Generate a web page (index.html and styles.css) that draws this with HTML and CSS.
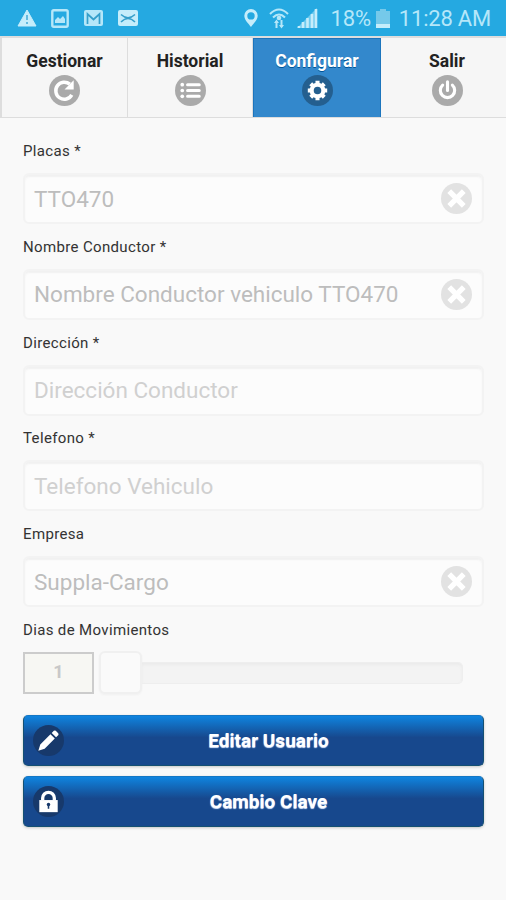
FILE: index.html
```html
<!DOCTYPE html>
<html lang="es">
<head>
    <meta charset="UTF-8">
    <title>Configurar</title>
    <link rel="stylesheet" href="styles.css">
</head>
<body>
    <div class="status-bar">
        <div class="notifications">
            <svg width="20" height="18" viewBox="0 0 20 18"><path d="M10 1L19 17H1Z" fill="#c5edfb" stroke="#c5edfb" stroke-linejoin="round"/><path d="M10 6v5M10 13v2" stroke="#62b9df" stroke-width="2"/></svg>
            <svg width="18" height="19" viewBox="0 0 18 19"><rect x="1.300" y="1.300" width="15.400" height="16.400" rx="1.500" fill="none" stroke="#b5e7f9" stroke-width="2.400"/><path d="M4 14V11l3-3 2 2 3-3 2 3v4z" fill="#b5e7f9"/></svg>
            <svg width="19" height="16" viewBox="0 0 19 16"><rect width="19" height="16" rx="2" fill="#b5e7f9"/><path d="M3.500 14V4l6 5.500L15.500 4v10" fill="none" stroke="#359fcb" stroke-width="1.700"/></svg>
            <svg width="20" height="16" viewBox="0 0 20 16"><rect width="20" height="16" rx="2" fill="#c5edfb"/><path d="M3 4.500Q10 11 17 4.500M3 12Q10 5 17 12" fill="none" stroke="#359fcb" stroke-width="1.600"/></svg>
        </div>
        <div class="system">
            <svg class="pin" width="14" height="18" viewBox="0 0 14 18"><path fill-rule="evenodd" d="M7 0a6.700 6.700 0 0 1 6.700 6.700C13.700 11 9 15 7 18C5 15 .3 11 .3 6.700A6.700 6.700 0 0 1 7 0zM7 3.200a3.700 3.700 0 1 0 0 7.400a3.700 3.700 0 0 0 0-7.400z" fill="#c5edfb"/></svg>
            <svg class="wifi" width="20" height="21" viewBox="0 0 20 21"><path d="M1 6Q10-3 19 6M4 9.500Q10 3.500 16 9.500" fill="none" stroke="#b5e7f9" stroke-width="2"/><circle cx="10" cy="10" r="2.300" fill="#b5e7f9"/><path d="M7.500 20v-7M12.500 12v7" stroke="#b5e7f9" stroke-width="2"/><path d="M5 15l2.500-3.500L10 15zM10 17l2.500 3.500L15 17z" fill="#b5e7f9"/></svg>
            <svg class="signal" width="21" height="20" viewBox="0 0 21 20"><path d="M0 20L20 0V20z" fill="#6fcbef"/><path d="M2 20v-2M6 20v-6M10.500 20v-10M15 20V6M19 20V1" stroke="#c5edfb" stroke-width="2.600"/></svg>
            <span class="percent">18%</span>
            <svg class="battery" width="14" height="19" viewBox="0 0 14 19"><path d="M4 0h6v2h4v17H0V2h4z" fill="#75c9ea"/><path d="M0 15h14v4H0z" fill="#c5edfb"/></svg>
            <span class="time">11:28 AM</span>
        </div>
    </div>

    <div class="navbar">
        <a class="tab">
            <span>Gestionar</span>
            <svg class="icon" viewBox="0 0 32 32"><circle cx="16" cy="16" r="16"/><path d="M23.500 20.500A8.800 8.800 0 1 1 21.500 9.500" fill="none" stroke="#fff" stroke-width="3.600"/><path d="M25.500 5.500v9.500H16z" fill="#fff"/></svg>
        </a>
        <a class="tab">
            <span>Historial</span>
            <svg class="icon" viewBox="0 0 32 32"><circle cx="16" cy="16" r="16"/><path d="M13 10h12M13 16h12M13 22h12" stroke="#fff" stroke-width="3.200" stroke-linecap="round"/><circle class="dot" cx="7.500" cy="10" r="1.900"/><circle class="dot" cx="7.500" cy="16" r="1.900"/><circle class="dot" cx="7.500" cy="22" r="1.900"/></svg>
        </a>
        <a class="tab active">
            <span>Configurar</span>
            <svg class="icon" viewBox="0 0 32 32"><circle cx="16" cy="16" r="16"/><circle cx="16" cy="16" r="6" fill="none" stroke="#fff" stroke-width="4.200"/><path d="M16 6v4M16 22v4M6 16h4M22 16h4M9 9l3 3M20 20l3 3M23 9l-3 3M12 20l-3 3" stroke="#fff" stroke-width="4.200"/></svg>
        </a>
        <a class="tab">
            <span>Salir</span>
            <svg class="icon" viewBox="0 0 32 32"><circle cx="16" cy="16" r="16"/><path d="M11 10.500a7.400 7.400 0 1 0 10 0" fill="none" stroke="#fff" stroke-width="3.200" stroke-linecap="round"/><path d="M16 7v9" stroke="#fff" stroke-width="3.200" stroke-linecap="round"/></svg>
        </a>
    </div>

    <div class="content">
        <div class="field">
            <label>Placas *</label>
            <div class="input-box">
                <span class="value">TTO470</span>
                <svg class="clear" viewBox="0 0 32 32"><circle cx="16" cy="16" r="16"/><path d="M8.500 8.500l15 15M23.500 8.500l-15 15"/></svg>
            </div>
        </div>
        <div class="field">
            <label>Nombre Conductor *</label>
            <div class="input-box">
                <span class="value">Nombre Conductor vehiculo TTO470</span>
                <svg class="clear" viewBox="0 0 32 32"><circle cx="16" cy="16" r="16"/><path d="M8.500 8.500l15 15M23.500 8.500l-15 15"/></svg>
            </div>
        </div>
        <div class="field">
            <label>Dirección *</label>
            <div class="input-box">
                <span class="value placeholder">Dirección Conductor</span>
            </div>
        </div>
        <div class="field">
            <label>Telefono *</label>
            <div class="input-box">
                <span class="value placeholder">Telefono Vehiculo</span>
            </div>
        </div>
        <div class="field">
            <label>Empresa</label>
            <div class="input-box">
                <span class="value">Suppla-Cargo</span>
                <svg class="clear" viewBox="0 0 32 32"><circle cx="16" cy="16" r="16"/><path d="M8.500 8.500l15 15M23.500 8.500l-15 15"/></svg>
            </div>
        </div>
        <div class="field slider-field">
            <label>Dias de Movimientos</label>
            <div class="slider">
                <div class="number">1</div>
                <div class="handle"></div>
                <div class="track"></div>
            </div>
        </div>

        <div class="button">
            <svg class="icon" viewBox="0 0 32 32"><circle cx="16" cy="16" r="16"/><path d="M5.500 26.500L7.500 20L18 9.500L22.500 14L12 24.500zM19.300 8.200L21.500 6Q22.500 5.200 23.500 6L26 8.500Q26.800 9.500 26 10.500L23.800 12.700z" fill="#fff"/></svg>
            <span>Editar Usuario</span>
        </div>
        <div class="button">
            <svg class="icon" viewBox="0 0 32 32"><circle cx="16" cy="16" r="16"/><path d="M10 15v-2.500a6 6 0 0 1 12 0V15" fill="none" stroke="#fff" stroke-width="3.400"/><path d="M6.500 14.500h19V27h-19z" fill="#fff"/><circle class="keyhole" cx="16" cy="19" r="1.800"/><path class="keyhole" d="M15.200 19h1.600v4.500h-1.600z"/></svg>
            <span>Cambio Clave</span>
        </div>
    </div>
</body>
</html>
```
FILE: styles.css
```css
* {
    box-sizing: border-box;
}

body {
    margin: 0;
    height: 900px;
    overflow: hidden;
    font-family: Roboto, sans-serif;
    background-color: #f9f9f9;
    color: #333;
}

svg {
    display: block;
    flex: none;
}

.status-bar {
    display: flex;
    justify-content: space-between;
    align-items: center;
    height: 36px;
    padding: 0 15px 0 17px;
    background-color: #25a9e1;
    color: #b5e7f9;
    font-size: 22px;
    letter-spacing: -0.2px;
    white-space: nowrap;
}

.notifications, .system {
    display: flex;
    align-items: center;
}

.notifications {
    gap: 15px;
}

.notifications svg:first-child {
    margin-right: -1px;
}

.wifi {
    margin-left: 11px;
}

.signal {
    margin-left: 8px;
}

.percent {
    margin-left: 13px;
}

.battery {
    margin-left: 5px;
}

.time {
    margin-left: 9px;
}

.navbar {
    display: grid;
    grid-template-columns: 128px 125px 128px 125px;
    height: 82px;
    border-top: 2px solid #ddd;
    border-bottom: 1px solid #ddd;
    background-color: #f6f6f6;
}

.tab {
    display: flex;
    flex-direction: column;
    align-items: center;
    padding-top: 13px;
    border-right: 1px solid #ddd;
    color: #222;
    font-size: 17.5px;
    font-weight: bold;
    line-height: 20px;
    text-shadow: 0 1px 0 #f3f3f3;
}

.tab:first-child {
    border-left: 2px solid #ddd;
}

.tab:last-child {
    border-right: none;
    padding-left: 7px;
}

.tab .icon {
    margin-top: 4px;
}

.icon {
    width: 31px;
    height: 31px;
    fill: #aaa;
}

.icon .dot {
    fill: #fff;
}

.active {
    background-color: #3388cc;
    border: 1px solid #1c75bd;
    border-bottom: none;
    padding-top: 12px;
    color: #fff;
    text-shadow: 0 1px 0 #005599;
}

.active .icon {
    fill: #245f8f;
}

.content {
    padding: 23px 22px 0 23px;
}

.field {
    height: 95.8px;
}

label {
    display: block;
    height: 32px;
    font-size: 15px;
    line-height: 20px;
    letter-spacing: 0.35px;
    text-shadow: 0 1px 0 #f3f3f3;
}

.input-box {
    display: flex;
    justify-content: space-between;
    align-items: center;
    height: 51px;
    padding: 0 10px 0 9px;
    border: 2px solid #f3f3f3;
    border-radius: 6px;
    background-color: #fcfcfc;
    box-shadow: inset 0 2px 2px #f1f1f1;
}

.value {
    color: #bdbdbd;
    font-size: 22.5px;
    white-space: nowrap;
}

.placeholder {
    color: #d0d0d0;
}

.clear {
    width: 31px;
    height: 31px;
    fill: #e2e2e2;
    stroke-width: 5.5;
}

.clear path {
    stroke: #fff;
}

.slider-field {
    height: 95px;
}

.slider {
    display: flex;
    align-items: center;
    height: 42px;
}

.number {
    width: 71px;
    height: 42px;
    border: 2px solid #ccc;
    background-color: #f7f7f3;
    color: #c8c8c8;
    font-size: 18px;
    font-weight: bold;
    line-height: 36px;
    text-align: center;
}

.handle {
    width: 43px;
    height: 43px;
    margin-left: 5px;
    border: 2px solid #f0f0f0;
    border-radius: 6px;
    background-color: #fafafa;
    box-shadow: 0 1px 2px #f0f0f0;
}

.track {
    width: 321px;
    height: 22px;
    border: 1px solid #eee;
    border-left: none;
    border-radius: 0 5px 5px 0;
    background-color: #f3f3f3;
    box-shadow: inset 0 2px 3px #ebebeb;
}

.button {
    display: grid;
    grid-template-columns: 31px 1fr;
    align-items: center;
    height: 51px;
    margin-bottom: 10px;
    padding: 0 10px 0 9px;
    border: 1px solid #145072;
    border-top-color: #1477c5;
    border-radius: 5px;
    background-image: linear-gradient(#0f84df, #17488d 44%, #17488d);
    box-shadow: 0 1px 3px rgba(0, 0, 0, 0.2);
    color: #fff;
    font-size: 19px;
    font-weight: bold;
    text-align: center;
    text-shadow: 0 1px 1px #dce8ff;
}

.button .icon {
    fill: #17396b;
}

.button .icon .keyhole {
    fill: #17396b;
}
```
